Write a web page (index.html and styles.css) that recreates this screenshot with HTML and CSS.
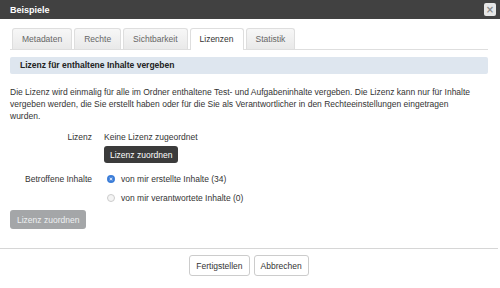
FILE: index.html
```html
<!DOCTYPE html>
<html lang="de">
<head>
    <meta charset="UTF-8">
    <title>Beispiele</title>
    <link rel="stylesheet" href="styles.css">
</head>
<body>
    <div class="modal">
        <div class="modal-header">
            <span class="modal-title">Beispiele</span>
            <button class="close-btn">&times;</button>
        </div>

        <div class="modal-body">
            <div class="tabs">
                <div class="tab">Metadaten</div>
                <div class="tab">Rechte</div>
                <div class="tab">Sichtbarkeit</div>
                <div class="tab active">Lizenzen</div>
                <div class="tab">Statistik</div>
            </div>

            <div class="section-title">Lizenz für enthaltene Inhalte vergeben</div>

            <p class="info">Die Lizenz wird einmalig für alle im Ordner enthaltene Test- und Aufgabeninhalte vergeben. Die Lizenz kann nur für Inhalte vergeben werden, die Sie erstellt haben oder für die Sie als Verantwortlicher in den Rechteeinstellungen eingetragen<br>wurden.</p>

            <div class="form-row">
                <div class="form-label">Lizenz</div>
                <div class="form-value">
                    <div>Keine Lizenz zugeordnet</div>
                    <button class="btn btn-dark">Lizenz zuordnen</button>
                </div>
            </div>

            <div class="form-row radios">
                <div class="form-label">Betroffene Inhalte</div>
                <div class="form-value">
                    <label class="radio"><span class="dot checked"></span>von mir erstellte Inhalte (34)</label>
                    <label class="radio"><span class="dot"></span>von mir verantwortete Inhalte (0)</label>
                </div>
            </div>

            <button class="btn btn-disabled">Lizenz zuordnen</button>
        </div>

        <div class="modal-footer">
            <button class="btn btn-light">Fertigstellen</button>
            <button class="btn btn-light">Abbrechen</button>
        </div>
    </div>
</body>
</html>
```

FILE: styles.css
```css
* {
    margin: 0;
    padding: 0;
    box-sizing: border-box;
}

body {
    font-family: 'Liberation Sans', Arial, sans-serif;
    font-size: 8.5px;
    color: #333;
    background: #fff;
}

.modal {
    width: 500px;
    height: 288px;
}

.modal-header {
    height: 19px;
    background: #414141;
    display: flex;
    align-items: center;
    justify-content: space-between;
    padding: 0 4px 0 10px;
}

.modal-title {
    color: #fff;
    font-weight: 700;
    font-size: 9px;
}

.close-btn {
    width: 12px;
    height: 13px;
    border: none;
    border-radius: 2px;
    background: #e6e6e6;
    color: #8a8a8a;
    font-size: 10px;
    line-height: 13px;
    font-family: 'DejaVu Sans', sans-serif;
    font-weight: 700;
}

.modal-body {
    padding: 9px 12px 0 10px;
    height: 229px;
}

.tabs {
    display: flex;
    gap: 2px;
    padding-left: 2px;
    border-bottom: 1px solid #dedede;
}

.tab {
    height: 21px;
    line-height: 20px;
    padding: 0 9px;
    border: 1px solid #dedede;
    border-bottom: none;
    border-radius: 3px 3px 0 0;
    background: linear-gradient(#f7f7f7, #e9e9e9);
    color: #666;
    font-size: 8.5px;
}

.tab.active {
    background: #fff;
    color: #333;
    margin-bottom: -1px;
    height: 22px;
}

.section-title {
    margin-top: 7px;
    height: 17px;
    line-height: 17px;
    padding-left: 10px;
    background: #dee6ef;
    border-radius: 2px;
    font-weight: 700;
    color: #222;
}

.info {
    margin-top: 12px;
    line-height: 12px;
}

.form-row {
    display: flex;
    margin-top: 9px;
}

.form-label {
    width: 82px;
    text-align: right;
    margin-right: 12px;
    line-height: 12px;
}

.form-value {
    display: flex;
    flex-direction: column;
    align-items: flex-start;
    line-height: 12px;
}

.radios {
    margin-top: 10px;
}

.radio {
    display: flex;
    align-items: center;
    height: 12px;
    margin-bottom: 7px;
}

.radio + .radio {
    margin-bottom: 6px;
}

.dot {
    width: 8px;
    height: 8px;
    border-radius: 50%;
    border: 1px solid #ccc;
    background: #f4f4f4;
    margin: 0 6px 0 3px;
}

.dot.checked {
    border: 2px solid #3b7dd8;
    background: #fff;
    box-shadow: inset 0 0 0 1px #3b7dd8;
}

.btn {
    font-family: 'Liberation Sans', Arial, sans-serif;
    font-size: 8.5px;
    border-radius: 3px;
}

.btn-dark {
    margin-top: 3px;
    height: 17px;
    padding: 0 6px;
    background: #3b3b3b;
    color: #fff;
    border: none;
}

.btn-disabled {
    height: 19px;
    padding: 0 7px;
    background: #a4a6a8;
    color: #eef0f2;
    border: none;
}

.modal-footer {
    border-top: 1px solid #d6d6d6;
    margin-right: 2px;
    display: flex;
    justify-content: center;
    gap: 4px;
    padding-top: 6px;
}

.btn-light {
    height: 21px;
    padding: 0 6px;
    background: #fff;
    color: #333;
    border: 1px solid #ccc;
}
```
